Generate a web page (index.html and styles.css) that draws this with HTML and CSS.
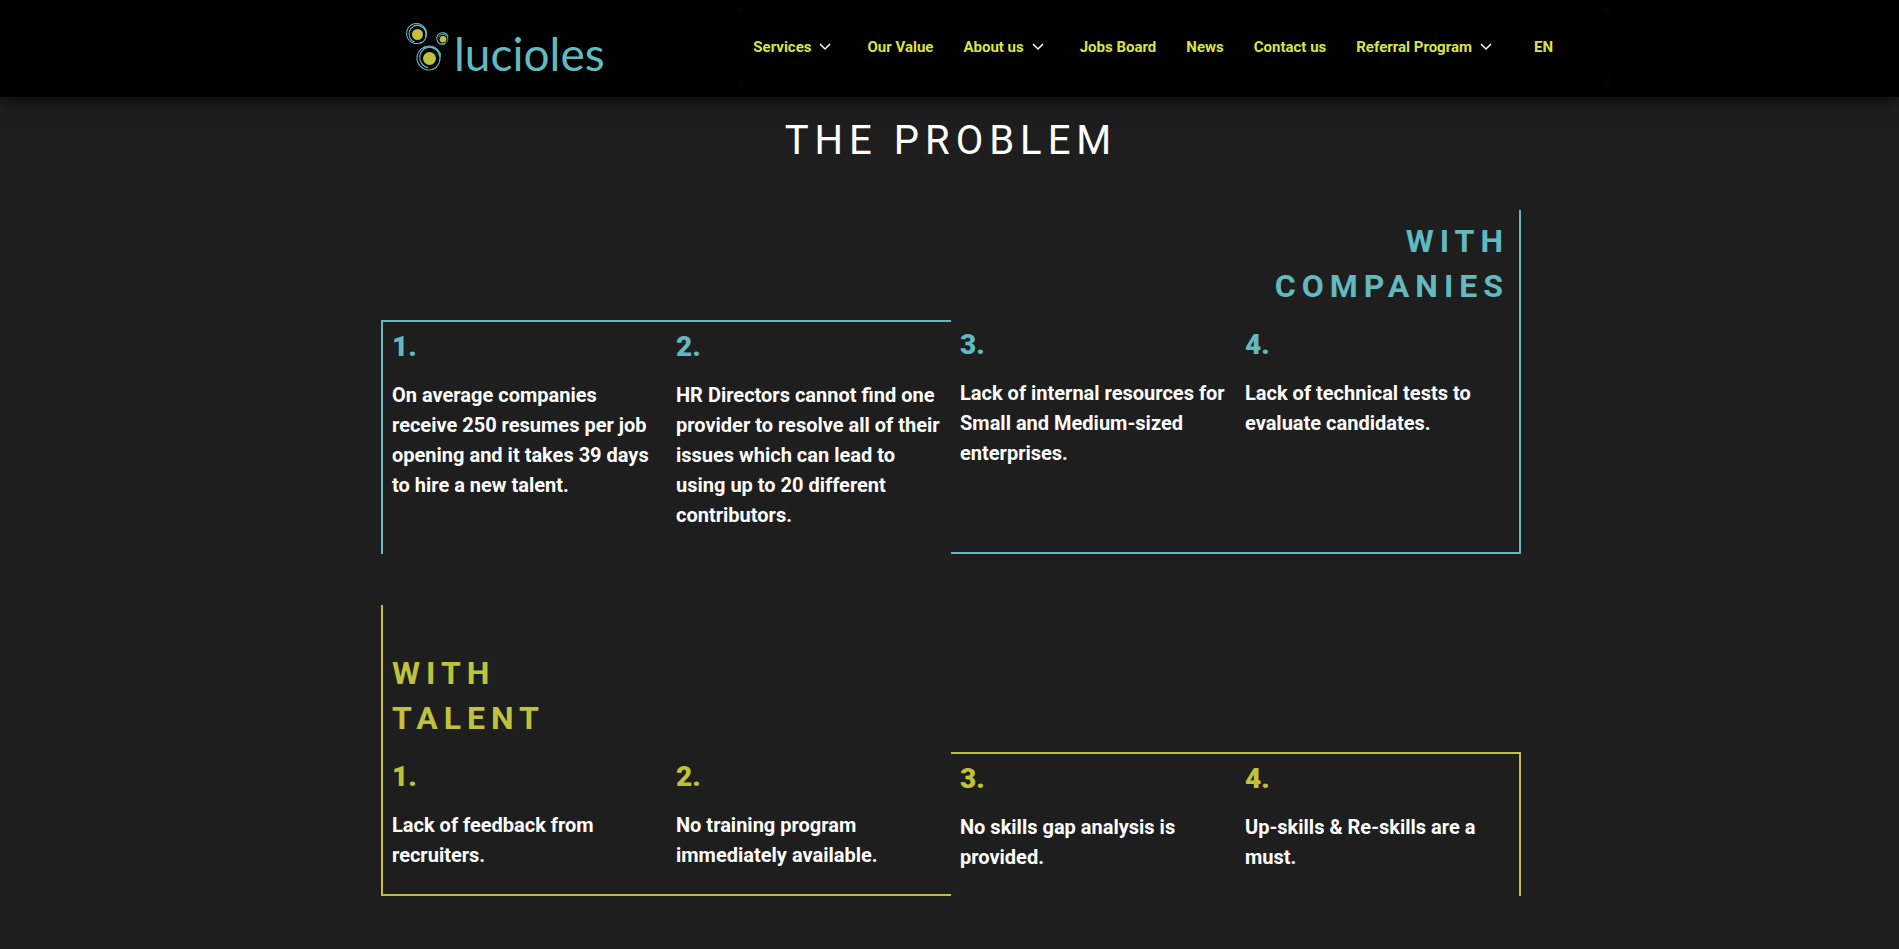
FILE: index.html
```html
<!DOCTYPE html>
<html lang="en">
<head>
<meta charset="utf-8">
<title>Lucioles</title>
<link rel="stylesheet" href="styles.css">
</head>
<body>
<header class="site-header">
  <div class="header-inner">
    <a class="logo" href="#" aria-label="lucioles">
      <svg class="logo-mark" viewBox="0 0 46 52" aria-hidden="true">
        <g fill="none" stroke="#62b9c0" stroke-width="1.1">
          <circle cx="11.500" cy="12.500" r="10" stroke-dasharray="52 11" transform="rotate(60 11.500 12.500)"/>
          <circle cx="12.500" cy="13" r="8.500" stroke-dasharray="40 14" transform="rotate(110 12.500 13)"/>
          <circle cx="12" cy="13.500" r="9.500" stroke-dasharray="30 30" transform="rotate(250 12 13.500)"/>
          <circle cx="37.500" cy="17.500" r="5.800" stroke-dasharray="28 9" transform="rotate(60 37.500 17.500)"/>
          <circle cx="38" cy="18" r="4.800" stroke-width="0.800" stroke-dasharray="22 9" transform="rotate(200 38 18)"/>
          <circle cx="24" cy="37" r="12" stroke-dasharray="62 14" transform="rotate(50 24 37)"/>
          <circle cx="25" cy="36.500" r="10.300" stroke-dasharray="46 19" transform="rotate(100 25 36.500)"/>
          <circle cx="23.500" cy="37.500" r="11.500" stroke-dasharray="38 35" transform="rotate(240 23.500 37.500)"/>
        </g>
        <g fill="#c0c23c">
          <circle cx="12.500" cy="13.500" r="5.500"/>
          <circle cx="38" cy="18.300" r="3.300"/>
          <circle cx="24.500" cy="37.500" r="6.500"/>
        </g>
      </svg>
      <span class="logo-text">lucioles</span>
    </a>
    <div class="nav-shell">
      <nav class="nav">
        <a href="#">Services<svg class="chevron" viewBox="0 0 12 8" aria-hidden="true"><path d="M1 1l5 5 5-5"/></svg></a>
        <a href="#">Our Value</a>
        <a href="#">About us<svg class="chevron" viewBox="0 0 12 8" aria-hidden="true"><path d="M1 1l5 5 5-5"/></svg></a>
        <a href="#">Jobs Board</a>
        <a href="#">News</a>
        <a href="#">Contact us</a>
        <a href="#">Referral Program<svg class="chevron" viewBox="0 0 12 8" aria-hidden="true"><path d="M1 1l5 5 5-5"/></svg></a>
        <a class="language" href="#">EN</a>
      </nav>
    </div>
  </div>
</header>
<main class="page">
  <h1 class="title">THE PROBLEM</h1>
  <section class="group companies">
    <div class="panel low">
      <div class="cols">
        <article class="item"><h3>1.</h3><p>On average companies receive 250 resumes per job opening and it takes 39 days to hire a new talent.</p></article>
        <article class="item"><h3>2.</h3><p>HR Directors cannot find one provider to resolve all of their issues which can lead to using up to 20 different contributors.</p></article>
      </div>
    </div>
    <div class="panel high">
      <h2>WITH<br>COMPANIES</h2>
      <div class="cols">
        <article class="item"><h3>3.</h3><p>Lack of internal resources for Small and Medium-sized enterprises.</p></article>
        <article class="item"><h3>4.</h3><p>Lack of technical tests to evaluate candidates.</p></article>
      </div>
    </div>
  </section>
  <section class="group talent">
    <div class="panel high">
      <h2>WITH<br>TALENT</h2>
      <div class="cols">
        <article class="item"><h3>1.</h3><p>Lack of feedback from recruiters.</p></article>
        <article class="item"><h3>2.</h3><p>No training program immediately available.</p></article>
      </div>
    </div>
    <div class="panel low">
      <div class="cols">
        <article class="item"><h3>3.</h3><p>No skills gap analysis is provided.</p></article>
        <article class="item"><h3>4.</h3><p>Up-skills &amp; Re-skills are a must.</p></article>
      </div>
    </div>
  </section>
</main>
</body>
</html>
```
FILE: styles.css
```css
* { box-sizing: border-box; }
body {
  margin: 0;
  background: #1e1e1e;
  color: #fff;
  font-family: Roboto, "Liberation Sans", sans-serif;
}
h1, h2, h3, p { margin: 0; }

.site-header {
  background: #000;
  box-shadow: 0 0 20px rgba(0, 0, 0, 0.9);
}
.header-inner {
  display: flex;
  justify-content: space-between;
  align-items: flex-start;
  max-width: 1319px;
  margin: 0 auto;
  padding: 7px 0 10px 115px;
}
.logo {
  display: flex;
  gap: 3px;
  padding-top: 14px;
  color: #62b9c0;
  text-decoration: none;
}
.logo-mark { width: 46px; height: 52px; }
.logo-text {
  font-family: Lato, sans-serif;
  font-size: 46px;
  line-height: 66px;
}
.nav-shell { background: #040404; }
.nav {
  display: flex;
  align-items: center;
  height: 80px;
  padding: 0 56px 0 14px;
  gap: 30px;
  background: #000;
  border-radius: 14px;
}
.nav a {
  display: flex;
  align-items: center;
  color: #dbe442;
  font-size: 15px;
  font-weight: 700;
  line-height: 20px;
  text-decoration: none;
  white-space: nowrap;
}
.chevron {
  width: 12px;
  height: 8px;
  margin: 0 6px 0 8px;
  fill: none;
  stroke: #fff;
  stroke-width: 1.5;
}
.nav .language { margin-left: 6px; }

.page {
  max-width: 1143px;
  margin: 0 auto;
  padding: 14px 0 53px 3px;
}
.title {
  font-size: 40px;
  font-weight: 400;
  line-height: 60px;
  letter-spacing: 6px;
  text-align: center;
}
.group {
  display: grid;
  grid-template-columns: 1fr 1fr;
  margin-top: 39px;
}
.group + .group { margin-top: 51px; }
.companies { color: #62b9c0; }
.talent { color: #c0c23c; }
.panel { border: 0 solid; }
.low { align-self: end; border-top-width: 2px; padding-top: 6px; }
.high { border-bottom-width: 2px; }
.panel:first-child { border-left-width: 2px; }
.panel:last-child { border-right-width: 2px; }
h2 {
  padding: 46px 9px 17px;
  font-size: 32px;
  font-weight: 700;
  line-height: 45px;
  letter-spacing: 6px;
}
.companies h2 {
  padding: 9px 10px 17px;
  text-align: right;
}
.cols {
  display: grid;
  grid-template-columns: 1fr 1fr;
  padding-bottom: 24px;
}
.panel:last-child .cols { column-gap: 2px; }
.companies .high .cols { padding-bottom: 84px; }
.item { padding: 0 9px; }
h3 {
  margin-bottom: 14px;
  font-size: 28px;
  font-weight: 900;
  line-height: 38px;
}
p {
  color: #fff;
  font-size: 20px;
  font-weight: 700;
  line-height: 30px;
}
```
